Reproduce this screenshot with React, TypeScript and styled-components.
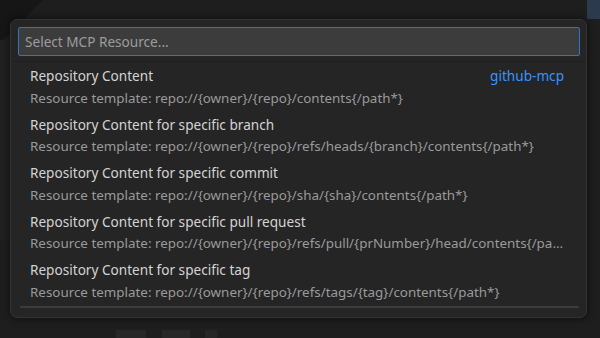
import React from "react";
import styled, { createGlobalStyle } from "styled-components";

const Global = createGlobalStyle`
  html, body { margin: 0; padding: 0; background: #1d1d1d; }
  body { font-family: "Noto Sans", "Open Sans", sans-serif; }
`;

const Stage = styled.div`
  width: 600px;
  height: 338px;
  box-sizing: border-box;
  overflow: hidden;
  padding: 19px 13px 20px 10px;
  background:
    linear-gradient(#2c3a4d, #2c3a4d) 587px 0 / 13px 19px no-repeat,
    linear-gradient(#272727, #272727) 116px 330px / 30px 8px no-repeat,
    linear-gradient(#272727, #272727) 162px 330px / 28px 8px no-repeat,
    linear-gradient(#262626, #262626) 205px 330px / 12px 8px no-repeat,
    linear-gradient(#212121, #212121) 0 40px / 10px 200px no-repeat,
    linear-gradient(135deg, #161616 0, #161616 30px, transparent 31px) 0 0 / 60px 40px no-repeat,
    #1e1e1e;
`;

const Panel = styled.div`
  height: 299px;
  box-sizing: border-box;
  background: #252526;
  border: 1px solid #333334;
  border-radius: 7px;
  box-shadow: 0 0 8px rgba(0, 0, 0, 0.6);
  display: flex;
  flex-direction: column;
  overflow: hidden;
`;

const Header = styled.div`
  padding: 7px 6px 5px 7px;
  border-bottom: 1px solid #1f1f1f;
`;

const Input = styled.div`
  height: 29px;
  box-sizing: border-box;
  background: #3c3c3c;
  border: 1px solid #2f74c0;
  border-radius: 2px;
  display: flex;
  align-items: center;
  padding-left: 6px;
  color: #9c9c9c;
  font-size: 13.6px;
`;

const List = styled.div`
  display: flex;
  flex-direction: column;
  padding-top: 1px;
`;

const Row = styled.div`
  height: 48.5px;
  box-sizing: border-box;
  padding: 1px 22px 0 19px;
  display: flex;
  flex-direction: column;
`;

const TitleLine = styled.div`
  height: 24px;
  display: flex;
  align-items: center;
  justify-content: space-between;
  color: #d4d4d4;
  font-size: 13.6px;
  white-space: nowrap;
`;

const Source = styled.span`
  color: #3794ff;
`;

const Sub = styled.div`
  height: 24px;
  line-height: 20px;
  color: #9a9a9a;
  font-size: 13.4px;
  white-space: nowrap;
  overflow: hidden;
  text-overflow: ellipsis;
  max-width: 538px;
`;

const Track = styled.div`
  margin: 0 7px 0 9px;
  height: 2px;
  border-radius: 1px;
  background: #3c3c3e;
`;

const items = [
  { t: "Repository Content", s: "Resource template: repo://{owner}/{repo}/contents{/path*}", src: "github-mcp" },
  { t: "Repository Content for specific branch", s: "Resource template: repo://{owner}/{repo}/refs/heads/{branch}/contents{/path*}" },
  { t: "Repository Content for specific commit", s: "Resource template: repo://{owner}/{repo}/sha/{sha}/contents{/path*}" },
  { t: "Repository Content for specific pull request", s: "Resource template: repo://{owner}/{repo}/refs/pull/{prNumber}/head/contents{/path*}" },
  { t: "Repository Content for specific tag", s: "Resource template: repo://{owner}/{repo}/refs/tags/{tag}/contents{/path*}" },
];

export default function App() {
  return (
    <Stage>
      <Global />
      <Panel>
        <Header>
          <Input>Select MCP Resource...</Input>
        </Header>
        <List>
          {items.map((it) => (
            <Row key={it.t}>
              <TitleLine>
                <span>{it.t}</span>
                {it.src && <Source>{it.src}</Source>}
              </TitleLine>
              <Sub>{it.s}</Sub>
            </Row>
          ))}
        </List>
        <Track />
      </Panel>
    </Stage>
  );
}
